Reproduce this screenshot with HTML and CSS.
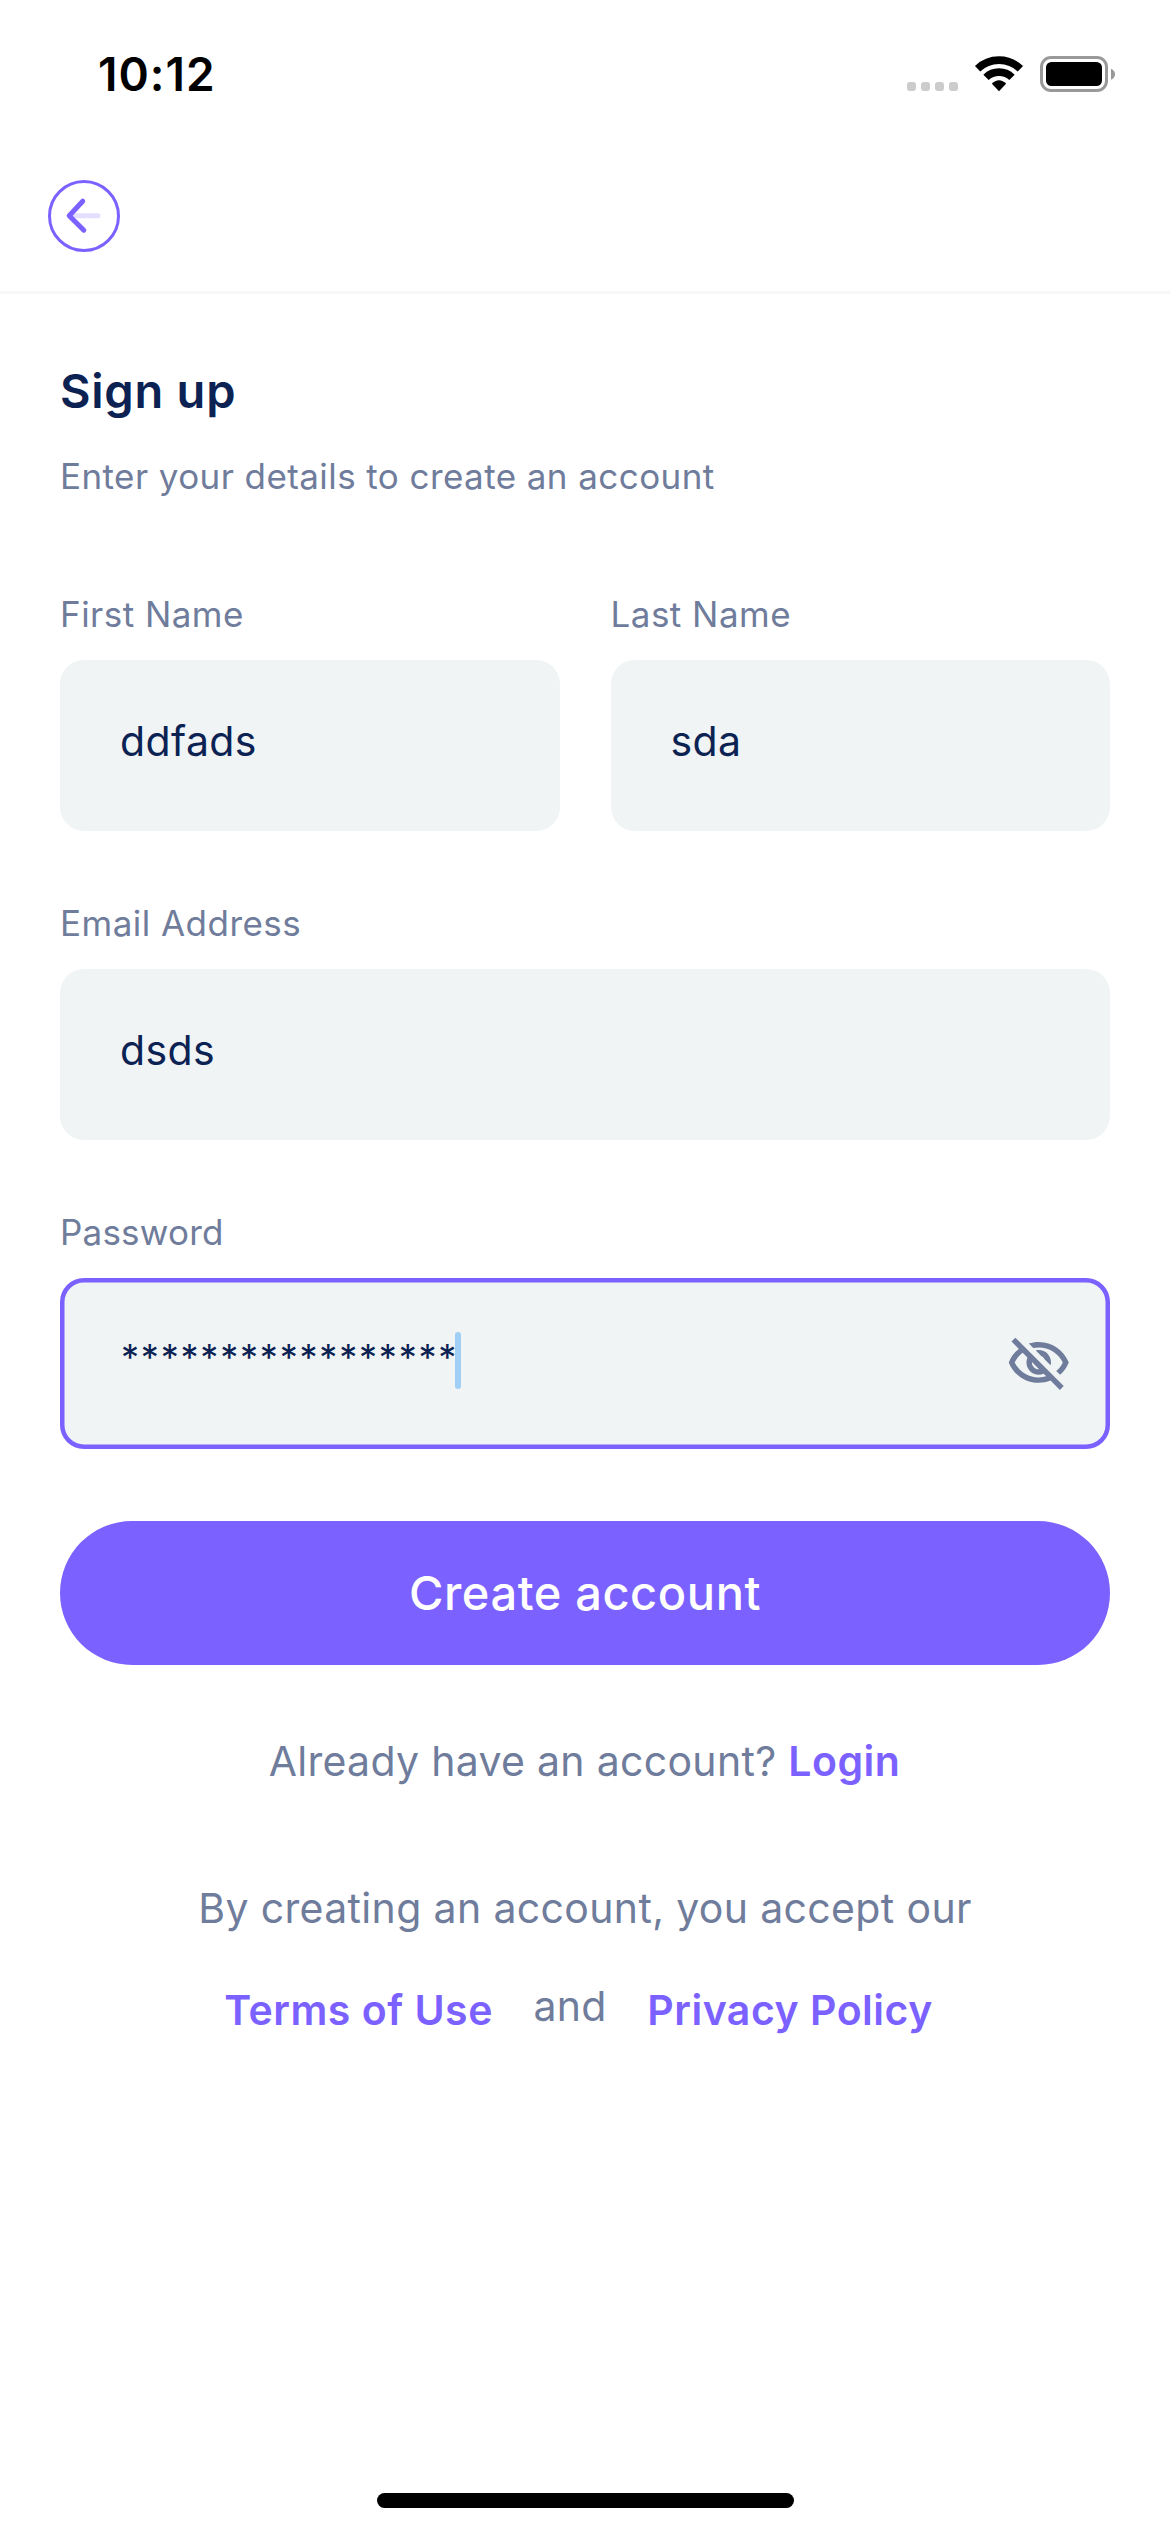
FILE: index.html
```html
<!DOCTYPE html>
<html lang="en">
<head>
<meta charset="utf-8">
<title>Sign up</title>
<link rel="stylesheet" href="styles.css">
</head>
<body>
<div class="screen">
  <div class="status-bar">
    <span class="clock">10:12</span>
    <svg class="status-icons" width="209" height="38" viewBox="0 0 209 38">
      <g fill="#cccccc">
        <rect x="0" y="27" width="9" height="9" rx="3"/>
        <rect x="14" y="27" width="9" height="9" rx="3"/>
        <rect x="28" y="27" width="9" height="9" rx="3"/>
        <rect x="42" y="27" width="9" height="9" rx="3"/>
      </g>
      <g fill="none" stroke="#000" stroke-width="7.6">
        <path d="M70.6 13.7A31 31 0 0 1 113.4 13.7"/>
        <path d="M79 22.4A18.6 18.6 0 0 1 105 22.4"/>
      </g>
      <path d="M92 36.2L84.9 28.8Q88 25.2 92 25.2T99.1 28.8Z"/>
      <rect x="134.5" y="2.5" width="65" height="33" rx="9.5" fill="none" stroke="#999" stroke-width="3"/>
      <rect x="139" y="7" width="56" height="24" rx="5.5"/>
      <path d="M204 13.7Q208 15.4 208 19.2T204 24.7Z" fill="#999"/>
    </svg>
  </div>

  <header class="header">
    <svg class="back" width="72" height="72" viewBox="0 0 72 72" fill="none" stroke="#7b61ff" stroke-linecap="round" stroke-linejoin="round">
      <circle cx="36" cy="36" r="34.5" stroke-width="3"/>
      <path d="M24 35.7H50" stroke="#e4dfff" stroke-width="5"/>
      <path d="M34.7 21.2L21.2 35.7L35.8 50.2" stroke-width="5"/>
    </svg>
  </header>

  <main class="content">
    <h1 class="title">Sign up</h1>
    <p class="subtitle">Enter your details to create an account</p>

    <div class="form">
      <div class="name-row">
        <div class="group">
          <div class="label">First Name</div>
          <div class="field">ddfads</div>
        </div>
        <div class="group">
          <div class="label">Last Name</div>
          <div class="field">sda</div>
        </div>
      </div>
      <div class="group">
        <div class="label">Email Address</div>
        <div class="field">dsds</div>
      </div>
      <div class="group">
        <div class="label label-password">Password</div>
        <div class="field field-active">
          <span class="mask">*****************</span>
          <span class="caret"></span>
          <svg class="eye" width="65.5" height="65.5" viewBox="0 0 24 24" fill="#6f7c9b">
            <path d="M12 6c3.79 0 7.17 2.13 8.82 5.5-.59 1.22-1.42 2.27-2.41 3.12l1.41 1.41c1.39-1.23 2.49-2.77 3.18-4.53C21.27 7.11 17 4 12 4c-1.27 0-2.49.2-3.64.57l1.65 1.65C10.66 6.09 11.32 6 12 6zm-1.07 1.14L13 9.21c.57.25 1.03.71 1.28 1.28l2.07 2.07c.08-.34.14-.7.14-1.07C16.5 9.01 14.48 7 12 7c-.37 0-.72.05-1.07.14zM2.01 3.87l2.68 2.68C3.06 7.83 1.77 9.53 1 11.5 2.73 15.89 7 19 12 19c1.52 0 2.98-.29 4.32-.82l3.42 3.42 1.41-1.41L3.42 2.45 2.01 3.87zm7.5 7.5l2.61 2.61c-.04.01-.08.02-.12.02-1.38 0-2.5-1.12-2.5-2.5 0-.05.01-.08.01-.13zm-3.4-3.4l1.75 1.75c-.23.55-.36 1.15-.36 1.78 0 2.48 2.02 4.5 4.5 4.5.63 0 1.23-.13 1.77-.36l.98.98c-.88.24-1.8.38-2.75.38-3.79 0-7.17-2.13-8.82-5.5.7-1.43 1.72-2.61 2.93-3.53z"/>
          </svg>
        </div>
      </div>
    </div>

    <button class="submit" type="button">Create account</button>
    <p class="login">Already have an account? <a class="link">Login</a></p>
    <p class="terms-intro">By creating an account, you accept our</p>
    <div class="terms">
      <a class="link">Terms of Use</a>
      <span class="and">and</span>
      <a class="link">Privacy Policy</a>
    </div>
  </main>

  <div class="home-indicator"></div>
</div>
</body>
</html>
```

FILE: styles.css
```css
* { box-sizing: border-box; }

body {
  margin: 0;
  background: #fff;
  font-family: Inter, "Liberation Sans", sans-serif;
  color: #6f7c9b;
}

h1, p { margin: 0; }

.screen {
  display: flex;
  flex-direction: column;
  width: 1170px;
  height: 2532px;
}

/* Status bar */
.status-bar {
  display: flex;
  justify-content: space-between;
  height: 141px;
  padding: 0 54px 0 98px;
}

.clock {
  padding-top: 49px;
  color: #000;
  font-size: 46px;
  font-weight: 600;
  line-height: 50px;
  letter-spacing: 1px;
}

.status-icons { margin-top: 55px; }

/* Header */
.header {
  display: flex;
  align-items: center;
  height: 153px;
  padding-left: 48px;
  border-bottom: 3px solid #f7f7f7;
}

/* Form */
.content {
  flex: 1;
  padding: 67px 60px 0;
}

.title {
  color: #0b2253;
  font-size: 47px;
  font-weight: 600;
  line-height: 60px;
  letter-spacing: 0.75px;
}

.subtitle {
  margin-top: 33px;
  font-size: 35px;
  line-height: 44px;
  letter-spacing: 0.42px;
}

.form {
  display: flex;
  flex-direction: column;
  gap: 70px;
  margin-top: 94px;
}

.name-row {
  display: grid;
  grid-template-columns: 1fr 1fr;
  gap: 51px;
}

.label {
  margin-bottom: 24px;
  font-size: 35px;
  line-height: 44px;
  letter-spacing: 0.47px;
}

.label-password { letter-spacing: 0.2px; }

.field {
  height: 171px;
  padding: 56px 60px 0;
  border-radius: 24px;
  background: #f0f4f5;
  color: #0b2253;
  font-size: 41px;
  line-height: 50px;
  letter-spacing: 0.4px;
}

.field-active {
  display: flex;
  align-items: flex-start;
  padding: 54px 39px 0 61px;
  box-shadow: inset 0 0 0 4.5px #7b61ff;
}

.mask {
  font-size: 36px;
  letter-spacing: 1.8px;
}

.caret {
  width: 6px;
  height: 57px;
  margin-left: -3px;
  border-radius: 3px;
  background: #a0cff5;
}

.eye { margin: -1px 0 0 auto; }

.submit {
  display: block;
  width: 100%;
  height: 144px;
  margin-top: 72px;
  padding: 0;
  border: 0;
  border-radius: 72px;
  background: #7b61ff;
  color: #fff;
  font: 500 47px/60px Inter, "Liberation Sans", sans-serif;
  letter-spacing: 0.58px;
}

/* Footer links */
.login,
.terms-intro,
.terms {
  font-size: 41px;
  line-height: 50px;
  letter-spacing: 0.35px;
  text-align: center;
}

.login {
  margin-top: 71px;
  padding-right: 1px;
  letter-spacing: 0.3px;
}

.terms-intro { margin-top: 97px; }

.link {
  color: #7b61ff;
  font-weight: 600;
  letter-spacing: 0.5px;
}

.terms {
  display: flex;
  justify-content: center;
  gap: 40.5px;
  margin-top: 48px;
  padding-right: 13px;
}

.terms .link { padding-top: 4px; }

.home-indicator {
  align-self: center;
  width: 417px;
  height: 15px;
  margin-bottom: 24px;
  border-radius: 8px;
  background: #000;
}
```
